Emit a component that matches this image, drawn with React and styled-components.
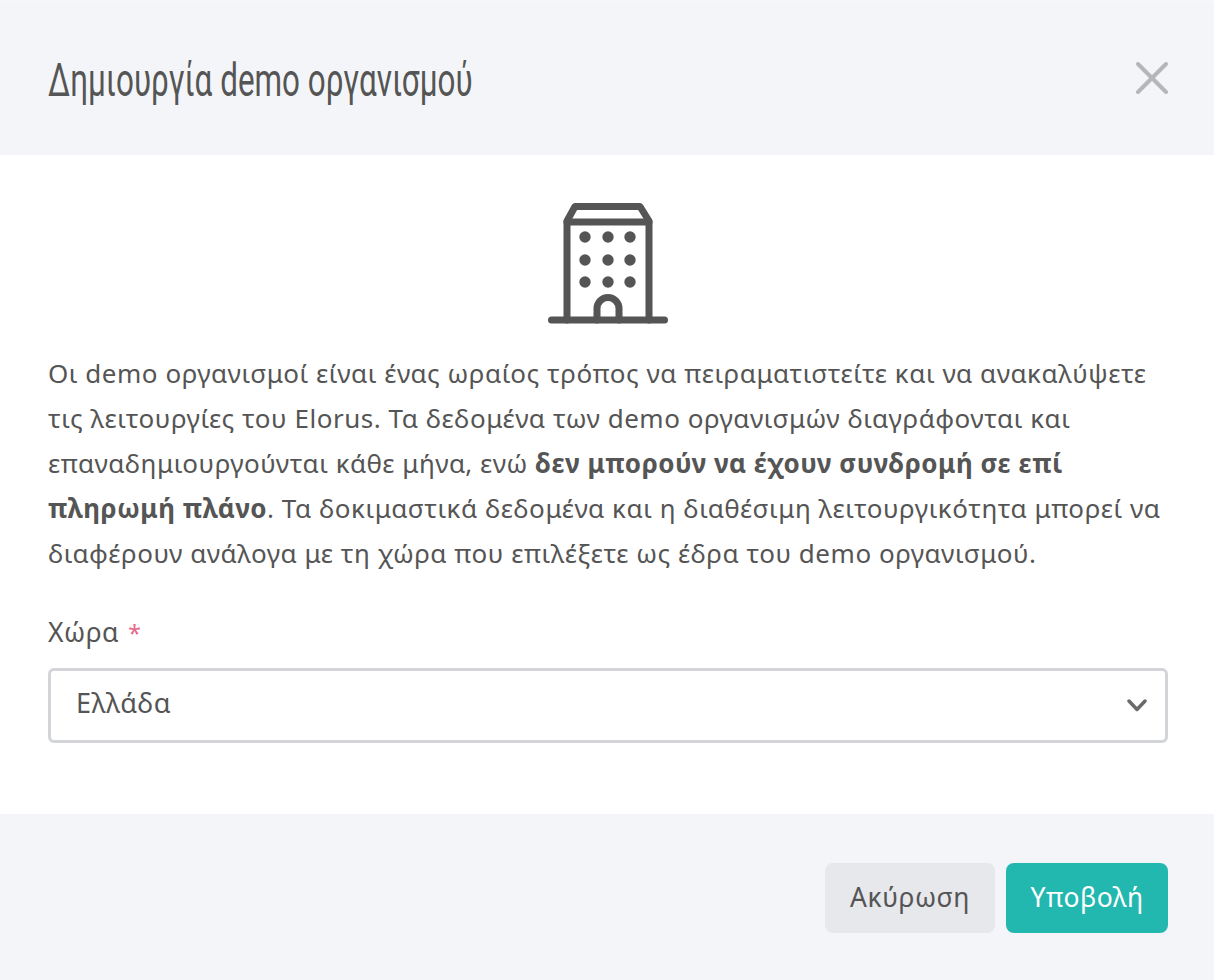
import React from 'react'
import styled, { createGlobalStyle } from 'styled-components'

const GlobalStyle = createGlobalStyle`
  html, body {
    margin: 0;
    padding: 0;
    background: #fff;
  }
  * {
    box-sizing: border-box;
  }
`
const Modal = styled.div`
  width: 1214px;
  height: 980px;
  display: flex;
  flex-direction: column;
  font-family: "Noto Sans", "Open Sans", sans-serif;
  color: #555;
  overflow: hidden;
`
const Header = styled.header`
  height: 155px;
  flex: none;
  display: flex;
  align-items: center;
  justify-content: space-between;
  padding: 0 46px 0 48px;
  background: #f4f5f9;
  border-top: 4px solid #f6f6f8;
`
const Title = styled.h1`
  margin: 0;
  font-family: "Roboto", sans-serif;
  font-weight: 400;
  font-size: 46px;
  line-height: 56px;
  white-space: nowrap;
  color: #555;
  transform: scaleX(0.683);
  transform-origin: left center;
`
const CloseButton = styled.button`
  width: 32px;
  height: 32px;
  margin-bottom: 3px;
  padding: 0;
  border: 0;
  background: none;
  display: flex;
  color: #b4b6ba;
`
const Body = styled.main`
  flex: 1;
  padding: 45px 46px 0 48px;
  background: #fff;
`
const IconWrap = styled.div`
  display: flex;
  justify-content: center;
  margin-bottom: 27px;
`
const Intro = styled.p`
  margin: 0 0 38px;
  font-size: 26px;
  line-height: 45px;
  letter-spacing: 0.53px;
  strong {
    font-weight: 700;
  }
`
const Label = styled.label`
  display: flex;
  align-items: baseline;
  gap: 9px;
  height: 34px;
  font-size: 26.5px;
  line-height: 36px;
  letter-spacing: 0.5px;
  margin-bottom: 20px;
`
const Required = styled.span`
  color: #e8688a;
  font-size: 23px;
`
const Select = styled.div`
  height: 75px;
  display: flex;
  align-items: center;
  justify-content: space-between;
  padding: 0 18px 0 25px;
  border: 3px solid #d3d4d8;
  border-radius: 6px;
  font-size: 27px;
  letter-spacing: 0.5px;
  color: #555;
`
const SelectValue = styled.span`
  padding-bottom: 7px;
`
const Footer = styled.footer`
  height: 166px;
  flex: none;
  display: flex;
  justify-content: flex-end;
  gap: 11px;
  padding: 49px 46px 0 0;
  background: #f4f5f9;
`
const Button = styled.button`
  height: 70px;
  width: ${p => (p.$primary ? '162px' : '170px')};
  padding: 0 0 3px;
  border: 0;
  border-radius: 8px;
  font-family: inherit;
  font-size: 26.5px;
  letter-spacing: 0.5px;
  background: ${p => (p.$primary ? '#22b8af' : '#e7e8eb')};
  color: ${p => (p.$primary ? '#fff' : '#555')};
`

const BuildingIcon = () => (
  <svg width="122" height="124" viewBox="0 0 122 124" fill="none" stroke="#555" strokeWidth="7" strokeLinecap="round" strokeLinejoin="round">
    <path d="M4.500 120h113" />
    <path d="M20 120V21L28 6.500h65L102 21v99" />
    <path d="M20 22h82" />
    <path d="M50 120v-11.500a11 11 0 0 1 22 0V120" />
    <g fill="#555" stroke="none">
      <circle cx="38" cy="37" r="5.700" />
      <circle cx="61" cy="37" r="5.700" />
      <circle cx="83" cy="37" r="5.700" />
      <circle cx="38" cy="60" r="5.700" />
      <circle cx="61" cy="60" r="5.700" />
      <circle cx="83" cy="60" r="5.700" />
      <circle cx="38" cy="82" r="5.700" />
      <circle cx="61" cy="82" r="5.700" />
      <circle cx="83" cy="82" r="5.700" />
    </g>
  </svg>
)

const CloseIcon = () => (
  <svg width="32" height="32" viewBox="0 0 32 32" fill="none" stroke="currentColor" strokeWidth="4" strokeLinecap="round">
    <path d="M2 2l28 28M30 2L2 30" />
  </svg>
)

const ChevronIcon = () => (
  <svg width="20" height="13" viewBox="0 0 20 13" fill="none" stroke="#6b6b6d" strokeWidth="3.500" strokeLinecap="round" strokeLinejoin="round">
    <path d="M2 2l8 8.500 8-8.500" />
  </svg>
)

export default function App() {
  return (
    <Modal>
      <GlobalStyle />
      <Header>
        <Title>Δημιουργία demo οργανισμού</Title>
        <CloseButton aria-label="close"><CloseIcon /></CloseButton>
      </Header>
      <Body>
        <IconWrap><BuildingIcon /></IconWrap>
        <Intro>
          Οι demo οργανισμοί είναι ένας ωραίος τρόπος να πειραματιστείτε και να ανακαλύψετε
          τις λειτουργίες του Elorus. Τα δεδομένα των demo οργανισμών διαγράφονται και
          επαναδημιουργούνται κάθε μήνα, ενώ <strong>δεν μπορούν να έχουν συνδρομή σε επί
          πληρωμή πλάνο</strong>. Τα δοκιμαστικά δεδομένα και η διαθέσιμη λειτουργικότητα μπορεί να
          διαφέρουν ανάλογα με τη χώρα που επιλέξετε ως έδρα του demo οργανισμού.
        </Intro>
        <Label>Χώρα <Required>*</Required></Label>
        <Select>
          <SelectValue>Ελλάδα</SelectValue>
          <ChevronIcon />
        </Select>
      </Body>
      <Footer>
        <Button>Ακύρωση</Button>
        <Button $primary>Υποβολή</Button>
      </Footer>
    </Modal>
  )
}
